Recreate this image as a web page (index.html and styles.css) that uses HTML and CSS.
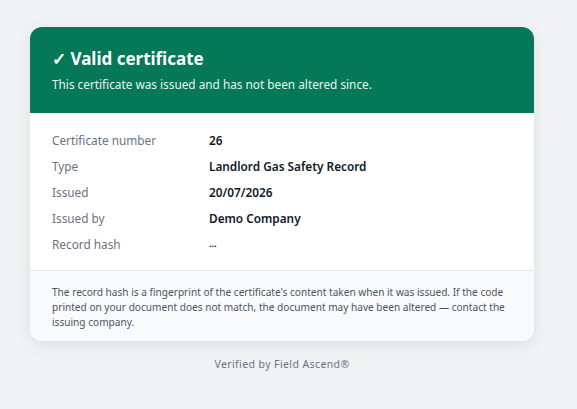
FILE: index.html
```html
<!DOCTYPE html>
<html lang="en">
<head>
<meta charset="utf-8">
<title>Certificate verification</title>
<link rel="stylesheet" href="styles.css">
</head>
<body>
<main class="page">
  <section class="card">
    <header class="card-head">
      <h1 class="title">✓ Valid certificate</h1>
      <p class="subtitle">This certificate was issued and has not been altered since.</p>
    </header>
    <dl class="details">
      <div class="row"><dt>Certificate number</dt><dd>26</dd></div>
      <div class="row"><dt>Type</dt><dd>Landlord Gas Safety Record</dd></div>
      <div class="row"><dt>Issued</dt><dd>20/07/2026</dd></div>
      <div class="row"><dt>Issued by</dt><dd>Demo Company</dd></div>
      <div class="row"><dt>Record hash</dt><dd class="hash">…</dd></div>
    </dl>
    <footer class="card-foot">
      The record hash is a fingerprint of the certificate's content taken when it was issued. If the code printed on your document does not match, the document may have been altered — contact the issuing company.
    </footer>
  </section>
  <p class="verified">Verified by Field Ascend®</p>
</main>
</body>
</html>
```

FILE: styles.css
```css
* { box-sizing: border-box; }
html, body { margin: 0; padding: 0; }
body {
  background: #f1f2f4;
  font-family: "Segoe UI", "Noto Sans", "Open Sans", sans-serif;
  color: #111827;
}
.page {
  padding: 27px 30px;
}
.card {
  max-width: 504px;
  background: #ffffff;
  border-radius: 12px;
  overflow: hidden;
  box-shadow: 0 4px 14px rgba(0, 0, 0, 0.08);
}
.card-head {
  background: #047857;
  color: #ffffff;
  padding: 20px 22px 20px;
}
.title {
  margin: 0;
  font-size: 17px;
  font-weight: 700;
  line-height: 24px;
}
.subtitle {
  margin: 4px 0 0;
  font-size: 11.8px;
  line-height: 18px;
  color: #e7f4ee;
}
.details {
  margin: 0;
  padding: 14px 22px 13px;
}
.row {
  display: grid;
  grid-template-columns: 157px 1fr;
  line-height: 26px;
  font-size: 11.8px;
}
.row dt { color: #6b7280; }
.row dd { margin: 0; font-weight: 600; color: #111827; }
.row .hash { font-size: 9px; font-weight: 700; color: #111827; }
.card-foot {
  background: #f9fafb;
  border-top: 1px solid #e5e7eb;
  padding: 14px 22px 11px;
  font-size: 10.1px;
  line-height: 15px;
  color: #4b5563;
}
.verified {
  margin: 16px 0 0;
  max-width: 504px;
  text-align: center;
  font-size: 10.5px;
  color: #6b7280;
  letter-spacing: 0.4px;
}
```
